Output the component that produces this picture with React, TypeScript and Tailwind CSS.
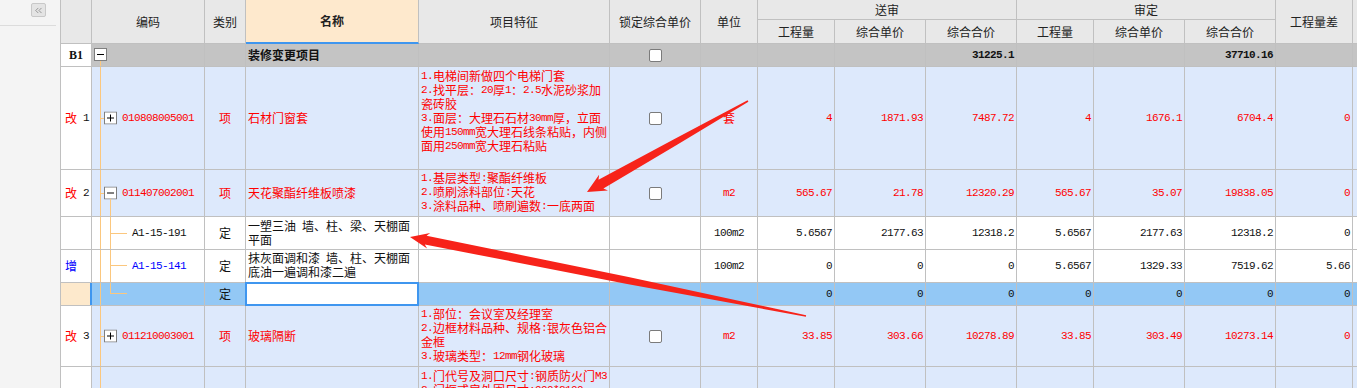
import React from "react";
import { ChevronsLeft } from "lucide-react";

const CJK = "font-['Noto_Sans_CJK_SC',sans-serif]";
const NUM = "font-['Liberation_Mono',monospace] text-[11px] tracking-[-0.6px]";
const LINE = "border-[#c0c0c0]";
const TREE = "bg-[#fbc77e]";
const RED = "text-[#ff0000]";
const BLK = "text-[#111111]";
const BLUE = "text-[#0000ff]";

const W = [
  "w-[31px]",
  "w-[113px]",
  "w-[41px]",
  "w-[173px]",
  "w-[191px]",
  "w-[91px]",
  "w-[57px]",
  "w-[77px]",
  "w-[91px]",
  "w-[91px]",
  "w-[77px]",
  "w-[91px]",
  "w-[91px]",
  "w-[77px]",
];

function T({ s }: { s: string }) {
  const parts = s.split(/([\x00-\x7f]+)/).filter((p) => p.length > 0);
  return (
    <>
      {parts.map((p, i) =>
        /^[\x00-\x7f]+$/.test(p) ? (
          <span key={i} className={`${NUM} whitespace-pre align-top`}>
            {p}
          </span>
        ) : (
          <span key={i} className="align-top">
            {p}
          </span>
        )
      )}
    </>
  );
}

function Cell({
  w,
  className = "",
  children,
}: {
  w: string;
  className?: string;
  children?: React.ReactNode;
}) {
  return (
    <div className={`${w} shrink-0 h-full border-r ${LINE} ${className}`}>
      {children}
    </div>
  );
}

function HCell({
  w,
  className = "",
  children,
}: {
  w: string;
  className?: string;
  children?: React.ReactNode;
}) {
  return (
    <div
      className={`${w} shrink-0 h-full border-r border-b ${LINE} flex items-center justify-center ${className}`}
    >
      {children}
    </div>
  );
}

function Box({ plus }: { plus?: boolean }) {
  return (
    <svg width="13" height="13" viewBox="0 0 13 13" className="block">
      <rect x="0.5" y="0.5" width="12" height="12" fill="#ffffff" stroke="#7f7f7f" />
      <path d="M3 6.5h7" stroke="#000000" />
      {plus && <path d="M6.5 3v7" stroke="#000000" />}
    </svg>
  );
}

function Check() {
  return (
    <div className="w-[13px] h-[13px] border border-[#7b7b7b] rounded-[2px] bg-white" />
  );
}

function Nums({
  vals,
  color,
  bold,
}: {
  vals: string[];
  color: string;
  bold?: boolean;
}) {
  return (
    <>
      {vals.map((v, i) => (
        <Cell
          key={i}
          w={W[7 + i]}
          className={`flex items-center justify-end pr-[2px] ${NUM} ${color} ${bold ? "font-bold" : ""}`}
        >
          {v}
        </Cell>
      ))}
      <div className="w-[100px] shrink-0 h-full" />
    </>
  );
}

function Lines({ lines, className }: { lines: string[]; className: string }) {
  return (
    <div className={`flex flex-col text-[12px] leading-[14px] ${className}`}>
      {lines.map((l, i) => (
        <div key={i} className="whitespace-nowrap h-[14px] shrink-0 overflow-visible">
          <T s={l} />
        </div>
      ))}
    </div>
  );
}

function LeftPanel() {
  return (
    <div className="w-[61px] shrink-0 h-full bg-[#f4f4f4] border-r border-[#c0c0c0] flex flex-col">
      <div className="ml-[31px] mt-[3px] w-[15px] h-[14px] bg-[#e4e4e4] border border-[#c8c8c8] rounded-[2px] flex items-center justify-center">
        <ChevronsLeft size={11} strokeWidth={1.6} color="#7a7a7a" />
      </div>
      <div className="mt-[8px] w-[56px] h-px bg-[#dcdcdc]" />
    </div>
  );
}

function Header() {
  return (
    <div className={`flex shrink-0 h-[44px] bg-[#e8e8e8] text-[12px] text-[#222222] ${CJK}`}>
      <HCell w={W[0]} />
      <HCell w={W[1]}>编码</HCell>
      <HCell w={W[2]}>类别</HCell>
      <div
        className={`${W[3]} shrink-0 h-full border-r ${LINE} border-b-2 border-b-[#3f96ef] bg-[#fee9cd] font-bold flex items-center justify-center`}
      >
        名称
      </div>
      <HCell w={W[4]}>项目特征</HCell>
      <HCell w={W[5]}>锁定综合单价</HCell>
      <HCell w={W[6]}>单位</HCell>
      <div className="w-[259px] shrink-0 h-full flex flex-col">
        <div className={`h-[20px] shrink-0 border-r border-b ${LINE} flex items-center justify-center`}>
          送审
        </div>
        <div className="flex flex-1">
          <HCell w={W[7]}>工程量</HCell>
          <HCell w={W[8]}>综合单价</HCell>
          <HCell w={W[9]}>综合合价</HCell>
        </div>
      </div>
      <div className="w-[259px] shrink-0 h-full flex flex-col">
        <div className={`h-[20px] shrink-0 border-r border-b ${LINE} flex items-center justify-center`}>
          审定
        </div>
        <div className="flex flex-1">
          <HCell w={W[10]}>工程量</HCell>
          <HCell w={W[11]}>综合单价</HCell>
          <HCell w={W[12]}>综合合价</HCell>
        </div>
      </div>
      <HCell w={W[13]}>工程量差</HCell>
      <div className={`w-[100px] shrink-0 h-full border-b ${LINE}`} />
    </div>
  );
}

function RowNo({ tag, n, color }: { tag: string; n?: string; color: string }) {
  return (
    <Cell w={W[0]} className={`bg-white flex items-center pl-[4px] text-[12px] ${CJK}`}>
      <span className={color}>{tag}</span>
      {n && <span className={`${NUM} ${BLK} ml-[6px]`}>{n}</span>}
    </Cell>
  );
}

function arrowPts(
  tx: number,
  ty: number,
  hx: number,
  hy: number,
  headLen: number,
  headHalf: number,
  near: number,
  mid: number,
  tail: number
) {
  const dx = hx - tx;
  const dy = hy - ty;
  const L = Math.hypot(dx, dy);
  const ux = dx / L;
  const uy = dy / L;
  const nx = -uy;
  const ny = ux;
  const bx = hx - ux * headLen;
  const by = hy - uy * headLen;
  const wx = hx - ux * (headLen + 3);
  const wy = hy - uy * (headLen + 3);
  const mx = tx + dx * 0.45;
  const my = ty + dy * 0.45;
  const p = [
    [tx + nx * tail, ty + ny * tail],
    [mx + nx * mid, my + ny * mid],
    [bx + nx * near, by + ny * near],
    [wx + nx * headHalf, wy + ny * headHalf],
    [hx, hy],
    [wx - nx * headHalf, wy - ny * headHalf],
    [bx - nx * near, by - ny * near],
    [mx - nx * mid, my - ny * mid],
    [tx - nx * tail, ty - ny * tail],
  ];
  return p.map((q) => q.map((v) => v.toFixed(1)).join(",")).join(" ");
}

function Arrows() {
  return (
    <svg
      className="absolute left-0 top-0 pointer-events-none"
      width="1357"
      height="388"
      viewBox="0 0 1357 388"
    >
      <polygon points={arrowPts(748, 101, 587, 192, 16, 9, 5, 3.2, 0.8)} fill="#f7231a" />
      <polygon points={arrowPts(806, 316, 410, 237, 16, 8, 4.5, 3.5, 0.7)} fill="#f7231a" />
    </svg>
  );
}

export default function App() {
  return (
    <div className="relative w-[1357px] h-[388px] overflow-hidden bg-white flex">
      <LeftPanel />
      <div className={`flex-1 min-w-0 h-full overflow-hidden flex flex-col ${CJK}`}>
        <Header />

        {/* B1 */}
        <div className={`flex shrink-0 h-[23px] border-b ${LINE} bg-[#c4c4c4]`}>
          <Cell
            w={W[0]}
            className={`bg-white flex items-center justify-center font-['Liberation_Serif',serif] font-bold text-[12px] ${BLK}`}
          >
            B1
          </Cell>
          <Cell w={W[1]} className="relative">
            <div className="absolute left-[2px] top-[4px]">
              <Box />
            </div>
            <div className={`absolute left-[8px] top-[17px] bottom-0 w-px ${TREE}`} />
          </Cell>
          <Cell w={W[2]} />
          <Cell w={W[3]} className={`flex items-center pl-[2px] text-[12px] font-bold ${BLK}`}>
            装修变更项目
          </Cell>
          <Cell w={W[4]} />
          <Cell w={W[5]} className="flex items-center justify-center">
            <Check />
          </Cell>
          <Cell w={W[6]} />
          <Nums vals={["", "", "31225.1", "", "", "37710.16", ""]} color={BLK} bold />
        </div>

        {/* Row 1 */}
        <div className={`flex shrink-0 h-[103px] border-b ${LINE} bg-[#dde9fc]`}>
          <RowNo tag="改" n="1" color={RED} />
          <Cell w={W[1]} className="relative flex items-center">
            <div className={`absolute left-[8px] top-0 bottom-0 w-px ${TREE}`} />
            <div className={`absolute left-[8px] top-1/2 w-[4px] h-px ${TREE}`} />
            <div className="absolute left-[12px] top-1/2 -translate-y-1/2">
              <Box plus />
            </div>
            <span className={`pl-[30px] ${NUM} ${RED}`}>010808005001</span>
          </Cell>
          <Cell w={W[2]} className={`flex items-center justify-center text-[12px] ${RED}`}>
            项
          </Cell>
          <Cell w={W[3]} className={`flex items-center pl-[2px] text-[12px] ${RED}`}>
            石材门窗套
          </Cell>
          <Cell w={W[4]} className="pl-[2px] pt-[2px] overflow-hidden">
            <Lines
              className={RED}
              lines={[
                "1.电梯间新做四个电梯门套",
                "2.找平层：20厚1：2.5水泥砂浆加",
                "瓷砖胶",
                "3.面层：大理石石材30mm厚，立面",
                "使用150mm宽大理石线条粘贴，内侧",
                "面用250mm宽大理石粘贴",
              ]}
            />
          </Cell>
          <Cell w={W[5]} className="flex items-center justify-center">
            <Check />
          </Cell>
          <Cell w={W[6]} className={`flex items-center justify-center text-[12px] ${RED}`}>
            套
          </Cell>
          <Nums vals={["4", "1871.93", "7487.72", "4", "1676.1", "6704.4", "0"]} color={RED} />
        </div>

        {/* Row 2 */}
        <div className={`flex shrink-0 h-[47px] border-b ${LINE} bg-[#dde9fc]`}>
          <RowNo tag="改" n="2" color={RED} />
          <Cell w={W[1]} className="relative flex items-center">
            <div className={`absolute left-[8px] top-0 bottom-0 w-px ${TREE}`} />
            <div className={`absolute left-[8px] top-1/2 w-[4px] h-px ${TREE}`} />
            <div className="absolute left-[12px] top-1/2 -translate-y-1/2">
              <Box />
            </div>
            <div className={`absolute left-[18px] top-[29px] bottom-0 w-px ${TREE}`} />
            <span className={`pl-[30px] ${NUM} ${RED}`}>011407002001</span>
          </Cell>
          <Cell w={W[2]} className={`flex items-center justify-center text-[12px] ${RED}`}>
            项
          </Cell>
          <Cell w={W[3]} className={`flex items-center pl-[2px] text-[12px] ${RED}`}>
            天花聚酯纤维板喷漆
          </Cell>
          <Cell w={W[4]} className="pl-[2px] pt-[1px] overflow-hidden">
            <Lines
              className={RED}
              lines={["1.基层类型:聚酯纤维板", "2.喷刷涂料部位:天花", "3.涂料品种、喷刷遍数:一底两面"]}
            />
          </Cell>
          <Cell w={W[5]} className="flex items-center justify-center">
            <Check />
          </Cell>
          <Cell w={W[6]} className={`flex items-center justify-center text-[12px] ${RED}`}>
            <T s="m2" />
          </Cell>
          <Nums
            vals={["565.67", "21.78", "12320.29", "565.67", "35.07", "19838.05", "0"]}
            color={RED}
          />
        </div>

        {/* A1-15-191 */}
        <div className={`flex shrink-0 h-[33px] border-b ${LINE} bg-white`}>
          <Cell w={W[0]} className="bg-white" />
          <Cell w={W[1]} className="relative flex items-center">
            <div className={`absolute left-[8px] top-0 bottom-0 w-px ${TREE}`} />
            <div className={`absolute left-[18px] top-0 bottom-0 w-px ${TREE}`} />
            <div className={`absolute left-[18px] top-1/2 w-[17px] h-px ${TREE}`} />
            <span className={`pl-[40px] ${NUM} ${BLK}`}>A1-15-191</span>
          </Cell>
          <Cell w={W[2]} className={`flex items-center justify-center text-[12px] ${BLK}`}>
            定
          </Cell>
          <Cell w={W[3]} className="pl-[2px] pt-[2px] overflow-hidden">
            <Lines className={BLK} lines={["一塑三油 墙、柱、梁、天棚面", "平面"]} />
          </Cell>
          <Cell w={W[4]} />
          <Cell w={W[5]} />
          <Cell w={W[6]} className={`flex items-center justify-center text-[12px] ${BLK}`}>
            <T s="100m2" />
          </Cell>
          <Nums
            vals={["5.6567", "2177.63", "12318.2", "5.6567", "2177.63", "12318.2", "0"]}
            color={BLK}
          />
        </div>

        {/* 增 A1-15-141 */}
        <div className={`flex shrink-0 h-[33px] border-b ${LINE} bg-white`}>
          <RowNo tag="增" color={BLUE} />
          <Cell w={W[1]} className="relative flex items-center">
            <div className={`absolute left-[8px] top-0 bottom-0 w-px ${TREE}`} />
            <div className={`absolute left-[18px] top-0 bottom-0 w-px ${TREE}`} />
            <div className={`absolute left-[18px] top-[15px] w-[17px] h-px ${TREE}`} />
            <span className={`pl-[40px] ${NUM} ${BLUE}`}>A1-15-141</span>
          </Cell>
          <Cell w={W[2]} className={`flex items-center justify-center text-[12px] ${BLK}`}>
            定
          </Cell>
          <Cell w={W[3]} className="pl-[2px] pt-[1px] overflow-hidden">
            <Lines className={BLK} lines={["抹灰面调和漆 墙、柱、天棚面", "底油一遍调和漆二遍"]} />
          </Cell>
          <Cell w={W[4]} />
          <Cell w={W[5]} />
          <Cell w={W[6]} className={`flex items-center justify-center text-[12px] ${BLK}`}>
            <T s="100m2" />
          </Cell>
          <Nums vals={["0", "0", "0", "5.6567", "1329.33", "7519.62", "5.66"]} color={BLK} />
        </div>

        {/* selected empty row */}
        <div className={`flex shrink-0 h-[23px] border-b ${LINE} bg-[#93c8f5]`}>
          <div className={`${W[0]} shrink-0 h-full bg-[#fde9cc] border-r-2 border-r-[#3f96ef]`} />
          <Cell w={W[1]} className="relative">
            <div className={`absolute left-[8px] top-0 bottom-0 w-px ${TREE}`} />
            <div className={`absolute left-[18px] top-0 h-[10px] w-px ${TREE}`} />
            <div className={`absolute left-[18px] top-[10px] w-[17px] h-px ${TREE}`} />
          </Cell>
          <Cell w={W[2]} className={`flex items-center justify-center text-[12px] ${BLK}`}>
            定
          </Cell>
          <Cell w={W[3]} className="relative">
            <div className="absolute -left-px -top-px -right-px -bottom-px border-2 border-[#3f96ef] bg-white z-10" />
          </Cell>
          <Cell w={W[4]} />
          <Cell w={W[5]} />
          <Cell w={W[6]} />
          <Nums vals={["0", "0", "0", "0", "0", "0", "0"]} color={BLK} />
        </div>

        {/* Row 3 */}
        <div className={`flex shrink-0 h-[61px] border-b ${LINE} bg-[#dde9fc]`}>
          <RowNo tag="改" n="3" color={RED} />
          <Cell w={W[1]} className="relative flex items-center">
            <div className={`absolute left-[8px] top-0 bottom-0 w-px ${TREE}`} />
            <div className={`absolute left-[8px] top-1/2 w-[4px] h-px ${TREE}`} />
            <div className="absolute left-[12px] top-1/2 -translate-y-1/2">
              <Box plus />
            </div>
            <span className={`pl-[30px] ${NUM} ${RED}`}>011210003001</span>
          </Cell>
          <Cell w={W[2]} className={`flex items-center justify-center text-[12px] ${RED}`}>
            项
          </Cell>
          <Cell w={W[3]} className={`flex items-center pl-[2px] text-[12px] ${RED}`}>
            玻璃隔断
          </Cell>
          <Cell w={W[4]} className="pl-[2px] pt-[1px] overflow-hidden">
            <Lines
              className={RED}
              lines={[
                "1.部位：会议室及经理室",
                "2.边框材料品种、规格:银灰色铝合",
                "金框",
                "3.玻璃类型：12mm钢化玻璃",
              ]}
            />
          </Cell>
          <Cell w={W[5]} className="flex items-center justify-center">
            <Check />
          </Cell>
          <Cell w={W[6]} className={`flex items-center justify-center text-[12px] ${RED}`}>
            <T s="m2" />
          </Cell>
          <Nums
            vals={["33.85", "303.66", "10278.89", "33.85", "303.49", "10273.14", "0"]}
            color={RED}
          />
        </div>

        {/* Row 4 (partial) */}
        <div className={`flex shrink-0 h-[60px] bg-[#dde9fc]`}>
          <Cell w={W[0]} className="bg-white" />
          <Cell w={W[1]} className="relative">
            <div className={`absolute left-[8px] top-0 bottom-0 w-px ${TREE}`} />
          </Cell>
          <Cell w={W[2]} />
          <Cell w={W[3]} />
          <Cell w={W[4]} className="pl-[2px] pt-[2px] overflow-hidden">
            <Lines
              className={RED}
              lines={["1.门代号及洞口尺寸:钢质防火门M3", "2.门框或扇外围尺寸:900*2100"]}
            />
          </Cell>
          <Cell w={W[5]} />
          <Cell w={W[6]} />
          <Nums vals={["", "", "", "", "", "", ""]} color={RED} />
        </div>
      </div>
      <Arrows />
    </div>
  );
}
